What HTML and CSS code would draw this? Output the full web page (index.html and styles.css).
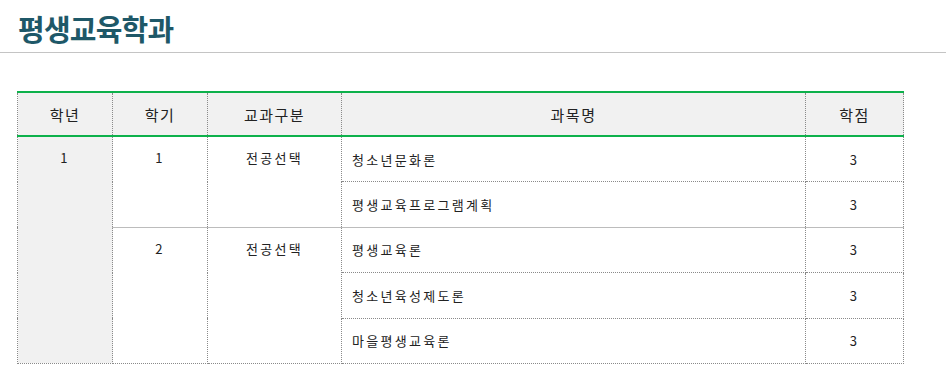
FILE: index.html
```html
<!DOCTYPE html>
<html lang="ko">
<head>
<meta charset="utf-8">
<link rel="stylesheet" href="styles.css">
</head>
<body>
<header class="page-head">
  <h1 class="page-title">평생교육학과</h1>
</header>
<main class="content">
  <table class="curri">
    <colgroup>
      <col class="c-year"><col class="c-sem"><col class="c-type"><col class="c-name"><col class="c-credit">
    </colgroup>
    <thead>
      <tr><th>학년</th><th>학기</th><th>교과구분</th><th>과목명</th><th>학점</th></tr>
    </thead>
    <tbody>
      <tr>
        <td class="year top" rowspan="5">1</td>
        <td class="top center" rowspan="2">1</td>
        <td class="top center" rowspan="2">전공선택</td>
        <td class="name">청소년문화론</td>
        <td class="center">3</td>
      </tr>
      <tr>
        <td class="name">평생교육프로그램계획</td>
        <td class="center">3</td>
      </tr>
      <tr class="group">
        <td class="top center" rowspan="3">2</td>
        <td class="top center" rowspan="3">전공선택</td>
        <td class="name">평생교육론</td>
        <td class="center">3</td>
      </tr>
      <tr>
        <td class="name">청소년육성제도론</td>
        <td class="center">3</td>
      </tr>
      <tr>
        <td class="name">마을평생교육론</td>
        <td class="center">3</td>
      </tr>
    </tbody>
  </table>
</main>
</body>
</html>
```
FILE: styles.css
```css
html, body {
  margin: 0;
  padding: 0;
  background: #fff;
}
body {
  font-family: "Noto Sans CJK KR", "Noto Sans", sans-serif;
  color: #222;
}
.page-head {
  height: 52px;
  border-bottom: 1px solid #c4c4c4;
}
.page-title {
  margin: 0;
  padding-left: 18px;
  font-size: 29px;
  line-height: 56px;
  font-weight: 700;
  letter-spacing: -0.8px;
  color: #1e5868;
}
.content {
  padding: 38px 0 0 17px;
}
.curri {
  width: 886px;
  border-collapse: collapse;
  table-layout: fixed;
  font-size: 13px;
}
.c-year { width: 95px; }
.c-sem { width: 95px; }
.c-type { width: 134px; }
.c-name { width: 464px; }
.c-credit { width: 98px; }
.curri th {
  height: 42px;
  background: #f1f1f1;
  font-weight: 400;
  font-size: 15px;
  letter-spacing: 1.5px;
  border-top: 2px solid #0db14b;
  border-bottom: 2px solid #0db14b;
  border-left: 1px dotted #8a8a8a;
  border-right: 1px dotted #8a8a8a;
  text-align: center;
  vertical-align: middle;
  padding: 0;
}
.curri td {
  height: 44.4px;
  border: 1px dotted #8a8a8a;
  padding: 0;
  vertical-align: middle;
  letter-spacing: 2.3px;
}
.curri td.top {
  vertical-align: top;
  padding-top: 11px;
}
.curri td.center { text-align: center; }
.curri td.name { padding-left: 10px; }
.curri td.year {
  background: #f1f1f1;
  text-align: center;
}
.curri tr.group td { border-top: 1px solid #bcbcbc; }
.curri tbody tr:last-child td, .curri td.year, .curri tr.group td[rowspan] {
  border-bottom: 1px dotted #8a8a8a;
}
```
